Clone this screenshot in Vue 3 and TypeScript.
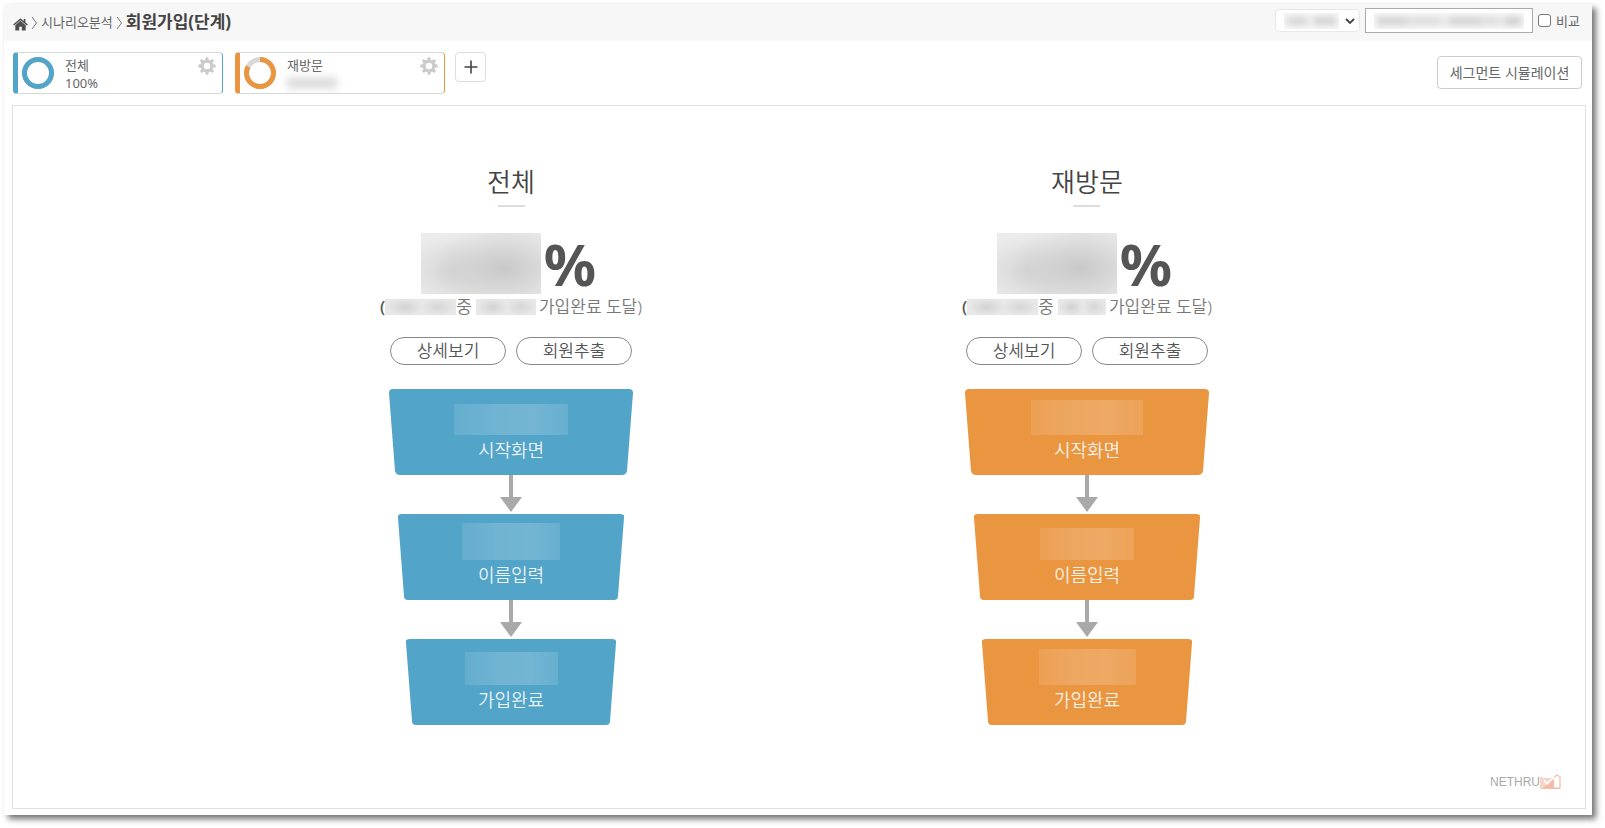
<script setup lang="ts">
import { ref } from 'vue'

interface Step { label: string; maskW: number; maskH: number }
interface Segment {
  id: string
  name: string
  share: string
  ratio: number
  totalW: number
  reachedW: number
  steps: Step[]
}

const segments: Segment[] = [
  {
    id: 'blue', name: '전체', share: '100%', ratio: 100, totalW: 71, reachedW: 60,
    steps: [
      { label: '시작화면', maskW: 114, maskH: 31 },
      { label: '이름입력', maskW: 98, maskH: 37 },
      { label: '가입완료', maskW: 93, maskH: 33 },
    ],
  },
  {
    id: 'orange', name: '재방문', share: '', ratio: 83, totalW: 71, reachedW: 48,
    steps: [
      { label: '시작화면', maskW: 112, maskH: 35 },
      { label: '이름입력', maskW: 94, maskH: 32 },
      { label: '가입완료', maskW: 97, maskH: 36 },
    ],
  },
]

const compare = ref(false)

const shapes = [
  'M4 0H240Q244 0 244 4L238 82Q237 86 233 86H11Q7 86 6 82L0 4Q0 0 4 0Z',
  'M13 0H231Q236 0 235 4L229 82Q229 86 225 86H19Q15 86 15 82L9 4Q8 0 13 0Z',
  'M21 0H223Q228 0 227 4L221 82Q221 86 217 86H27Q23 86 23 82L17 4Q16 0 21 0Z',
]

const teeth = [0, 45, 90, 135, 180, 225, 270, 315]
</script>

<template>
  <div class="window">
    <header class="topbar">
      <nav class="crumbs" aria-label="경로">
        <a href="#" class="home" aria-label="홈">
          <svg width="15" height="13" viewBox="0 0 15 13">
            <path d="M7.500 2.800L2.300 7.200V12.500H6.200V8.800H8.800V12.500H12.700V7.200Z" fill="#505050" />
            <path d="M.6 7L7.500 1.200L14.400 7M11.600 1V4.300" fill="none" stroke="#505050" stroke-width="1.600" />
          </svg>
        </a>
        <svg class="sep" width="7" height="14" viewBox="0 0 7 14"><path d="M1 1L5.500 7L1 13" fill="none" stroke="#777" /></svg>
        <a href="#" class="crumb">시나리오분석</a>
        <svg class="sep" width="7" height="14" viewBox="0 0 7 14"><path d="M1 1L5.500 7L1 13" fill="none" stroke="#777" /></svg>
        <h1>회원가입(단계)</h1>
      </nav>
      <div class="filters">
        <div class="field period">
          <select aria-label="기간"><option></option></select>
          <span class="smudge"><i></i></span>
          <svg class="chevron" width="10" height="7" viewBox="0 0 10 7"><path d="M1 1L5 5L9 1" fill="none" stroke="#444" stroke-width="1.800" /></svg>
        </div>
        <div class="field dates">
          <input type="text" aria-label="날짜" />
          <span class="smudge"><i></i></span>
        </div>
        <label class="compare"><input v-model="compare" type="checkbox" />비교</label>
      </div>
    </header>

    <section class="segments">
      <article v-for="s in segments" :key="s.id" class="tab" :class="s.id">
        <svg class="ring" width="32" height="32" viewBox="0 0 32 32">
          <circle cx="16" cy="16" r="13.500" fill="none" stroke="#d9d9d9" stroke-width="5" />
          <circle cx="16" cy="16" r="13.500" fill="none" stroke="currentColor" stroke-width="5" pathLength="100" :stroke-dasharray="`${s.ratio} 100`" transform="rotate(-90 16 16)" />
        </svg>
        <div class="tab-text">
          <span>{{ s.name }}</span>
          <span v-if="s.share">{{ s.share }}</span>
          <span v-else class="hidden-share"></span>
        </div>
        <button type="button" class="gear" :aria-label="`${s.name} 설정`">
          <svg width="18" height="18" viewBox="-9 -9 18 18">
            <circle r="4.800" fill="none" stroke="#cbcbcb" stroke-width="3" />
            <path v-for="t in teeth" :key="t" d="M-1.900 -5.500L-1.300 -8.700H1.300L1.900 -5.500Z" fill="#cbcbcb" :transform="`rotate(${t})`" />
          </svg>
        </button>
      </article>
      <button type="button" class="add" aria-label="추가">
        <svg width="14" height="14" viewBox="0 0 14 14"><path d="M7 .5V13.500M.5 7H13.500" stroke="#444" stroke-width="1.600" /></svg>
      </button>
      <button type="button" class="simulate">세그먼트 시뮬레이션</button>
    </section>

    <main class="panel">
      <div class="columns">
        <section v-for="s in segments" :key="s.id" class="column" :class="s.id">
          <h2>{{ s.name }}</h2>
          <p class="rate"><span class="rate-mask"></span>%</p>
          <p class="reach">
            <b>(</b><span class="blot" :style="{ width: s.totalW + 'px' }"></span>중
            <span class="blot" :style="{ width: s.reachedW + 'px' }"></span><span class="goal">가입완료 도달)</span>
          </p>
          <div class="actions">
            <button type="button">상세보기</button>
            <button type="button">회원추출</button>
          </div>
          <ol class="funnel">
            <li v-for="(step, i) in s.steps" :key="step.label">
              <svg v-if="i > 0" class="arrow" width="22" height="38" viewBox="0 0 22 38"><path d="M9 0H13V22H22L11 37L0 22H9Z" fill="#a9a9a9" /></svg>
              <div class="step">
                <svg class="shape" width="244" height="86" viewBox="0 0 244 86"><path :d="shapes[i]" fill="currentColor" /></svg>
                <div class="step-text">
                  <div class="count"><span class="veil" :style="{ width: step.maskW + 'px', height: step.maskH + 'px' }"></span></div>
                  <span class="step-name">{{ step.label }}</span>
                </div>
              </div>
            </li>
          </ol>
        </section>
      </div>
      <footer class="brand">
        <span>NETHRU</span>
        <svg width="21" height="16" viewBox="0 0 21 16">
          <path d="M1 3V14H20V3L17 1L13 4" fill="none" stroke="#f6c9bb" stroke-width="1.500" />
          <path d="M2 4H12L14 3V14H2Z" fill="#f8d3c7" />
          <path d="M2 15L14 4V14H20V15Z" fill="#f6bba8" />
          <path d="M4 6L7 10L14 3" fill="none" stroke="#fff" stroke-width="1.800" />
        </svg>
      </footer>
    </main>
  </div>
</template>

<style>
body {
  margin: 0;
  background: #fff;
}
</style>

<style scoped>
* { box-sizing: border-box; }
.window {
  display: flex;
  flex-direction: column;
  min-height: calc(100vh - 17px);
  margin: 4px 13px 13px 4px;
  background: #fff;
  box-shadow: 4px 4px 6px rgba(0, 0, 0, 0.55);
  color: #555;
  font-family: "Noto Sans", "Noto Sans CJK KR", sans-serif;
  font-size: 13px;
}
button, input, select { font: inherit; color: inherit; }
button { padding: 0; background: #fff; cursor: pointer; }
h1, h2, p, ol { margin: 0; padding: 0; }
ol { list-style: none; }
svg { display: block; }
.blue { color: #53a4c9; }
.orange { color: #ea9540; }

.topbar {
  display: flex;
  justify-content: space-between;
  height: 37px;
  padding: 0 12px 0 9px;
  background: #f7f7f7;
}
.crumbs { display: flex; align-items: center; height: 36px; gap: 3px; }
.home { padding-top: 4px; }
.sep { margin-top: 2px; }
.crumb { color: #666; text-decoration: none; line-height: 18px; }
h1 { font-size: 17px; line-height: 24px; font-weight: 700; color: #444; }
.filters { display: flex; align-items: center; height: 33px; gap: 5px; }
.field { position: relative; }
.field select, .field input { display: block; width: 100%; height: 100%; background: #fff; outline: 0; }
.period { width: 85px; height: 23px; }
.period select { appearance: none; border: 1px solid #e8e8e8; border-radius: 4px; }
.dates { width: 168px; height: 25px; }
.dates input { border: 1px solid #aaa; }
.smudge {
  position: absolute;
  top: 4px;
  left: 9px;
  height: 16px;
  width: 55px;
  overflow: hidden;
  background: #f6f6f6;
  pointer-events: none;
}
.smudge i {
  display: block;
  height: 8px;
  margin: 4px 3px;
  filter: blur(3px);
  background: linear-gradient(90deg, #d4d4d4 0 20px, #eee 20px 27px, #d0d0d0 27px);
}
.dates .smudge { width: 150px; top: 5px; }
.dates .smudge i { background: linear-gradient(90deg, #d0d0d0 0 28px, #dcdcdc 28px 64px, #eaeaea 64px 72px, #d2d2d2 72px 104px, #dcdcdc 104px 122px, #e8e8e8 122px 128px, #cccccc 128px); }
.chevron { position: absolute; right: 5px; top: 9px; pointer-events: none; }
.compare { display: flex; align-items: center; gap: 5px; line-height: 18px; color: #666; }
.compare input {
  appearance: none;
  width: 13px;
  height: 13px;
  margin: 0;
  border: 1px solid #777;
  border-radius: 3px;
  background: #fff;
}
.compare input:checked { background: #53a4c9; }

.segments { display: flex; align-items: flex-start; gap: 12px; padding: 11px 10px 11px 9px; }
.tab {
  display: flex;
  width: 210px;
  height: 42px;
  padding: 3px 6px 0 4px;
  border: 1px solid #d4dada;
  border-left: 5px solid currentColor;
  border-right-color: currentColor;
  border-radius: 4px;
}
.tab-text { display: flex; flex: 1; flex-direction: column; padding-left: 11px; line-height: 18px; color: #666; }
.ring { flex: none; margin-top: 1px; }
.hidden-share { width: 50px; height: 10px; margin-top: 4px; background: #d6d6d6; filter: blur(4px); }
.gear { width: 18px; height: 18px; margin-top: 1px; border: 0; }
.add {
  display: grid;
  place-items: center;
  width: 31px;
  height: 30px;
  margin-left: -2px;
  border: 1px solid #ddd;
  border-radius: 4px;
}
.simulate {
  width: 145px;
  height: 33px;
  margin: 4px 0 0 auto;
  padding-bottom: 2px;
  border: 1px solid #ccc;
  border-radius: 4px;
  font-size: 14px;
  color: #666;
}

.panel {
  display: flex;
  flex: 1;
  flex-direction: column;
  justify-content: space-between;
  margin: 0 6px 6px 8px;
  padding: 56px 24px 17px;
  border: 1px solid #e0e0e0;
}
.columns { display: grid; grid-template-columns: repeat(2, minmax(0, 576px)); justify-content: center; }
.column { display: flex; flex-direction: column; align-items: center; }
h2 {
  display: flex;
  flex-direction: column;
  align-items: center;
  font-size: 26px;
  line-height: 40px;
  font-weight: 350;
  color: #444;
}
h2::after { content: ""; width: 27px; height: 2px; margin-top: 3px; background: #ddd; }
.rate {
  display: flex;
  align-items: center;
  gap: 3px;
  margin-top: 26px;
  padding-right: 5px;
  height: 61px;
  font-size: 58px;
  font-weight: 700;
  line-height: 60px;
  color: #555;
}
.rate-mask {
  width: 120px;
  height: 61px;
  background:
    radial-gradient(ellipse 60% 75% at 70% 58%, #c8c8c8, transparent),
    radial-gradient(ellipse 45% 60% at 25% 62%, #d6d6d6, transparent),
    #ececec;
}
.reach { display: flex; align-items: center; height: 26px; font-size: 17px; line-height: 26px; font-weight: 350; color: #777; }
.reach b { font-weight: 500; color: #555; }
.blot {
  height: 16px;
  background: radial-gradient(ellipse 25% 55% at 28% 50%, #d2d2d2, transparent), radial-gradient(ellipse 25% 55% at 75% 50%, #d6d6d6, transparent), #e8e8e8;
}
.blot + .goal { padding-left: 3px; }
.reach .blot:nth-of-type(2) { margin-left: 4px; }
.actions { display: flex; gap: 10px; margin-top: 17px; }
.actions button {
  width: 116px;
  height: 28px;
  border: 1px solid #888;
  border-radius: 14px;
  font-size: 17px;
  line-height: 24px;
  font-weight: 350;
  color: #555;
}
.funnel { margin-top: 24px; }
.funnel li { display: flex; flex-direction: column; align-items: center; }
.arrow { margin-bottom: 1px; }
.step { display: grid; }
.shape, .step-text { grid-area: 1 / 1; }
.step-text { display: flex; flex-direction: column; align-items: center; }
.count { display: flex; align-items: flex-end; height: 46px; }
.veil { background: linear-gradient(90deg, rgba(255, 255, 255, 0.1), rgba(255, 255, 255, 0.17) 35%, rgba(255, 255, 255, 0.19) 70%, rgba(255, 255, 255, 0.12)); }
.step-name { font-size: 18px; line-height: 30px; font-weight: 350; color: rgba(255, 255, 255, 0.9); }
.brand { display: flex; justify-content: flex-end; align-items: center; color: #aaa; font-family: "Liberation Sans Narrow", "Liberation Sans", sans-serif; font-size: 12px; line-height: 18px; }
</style>
